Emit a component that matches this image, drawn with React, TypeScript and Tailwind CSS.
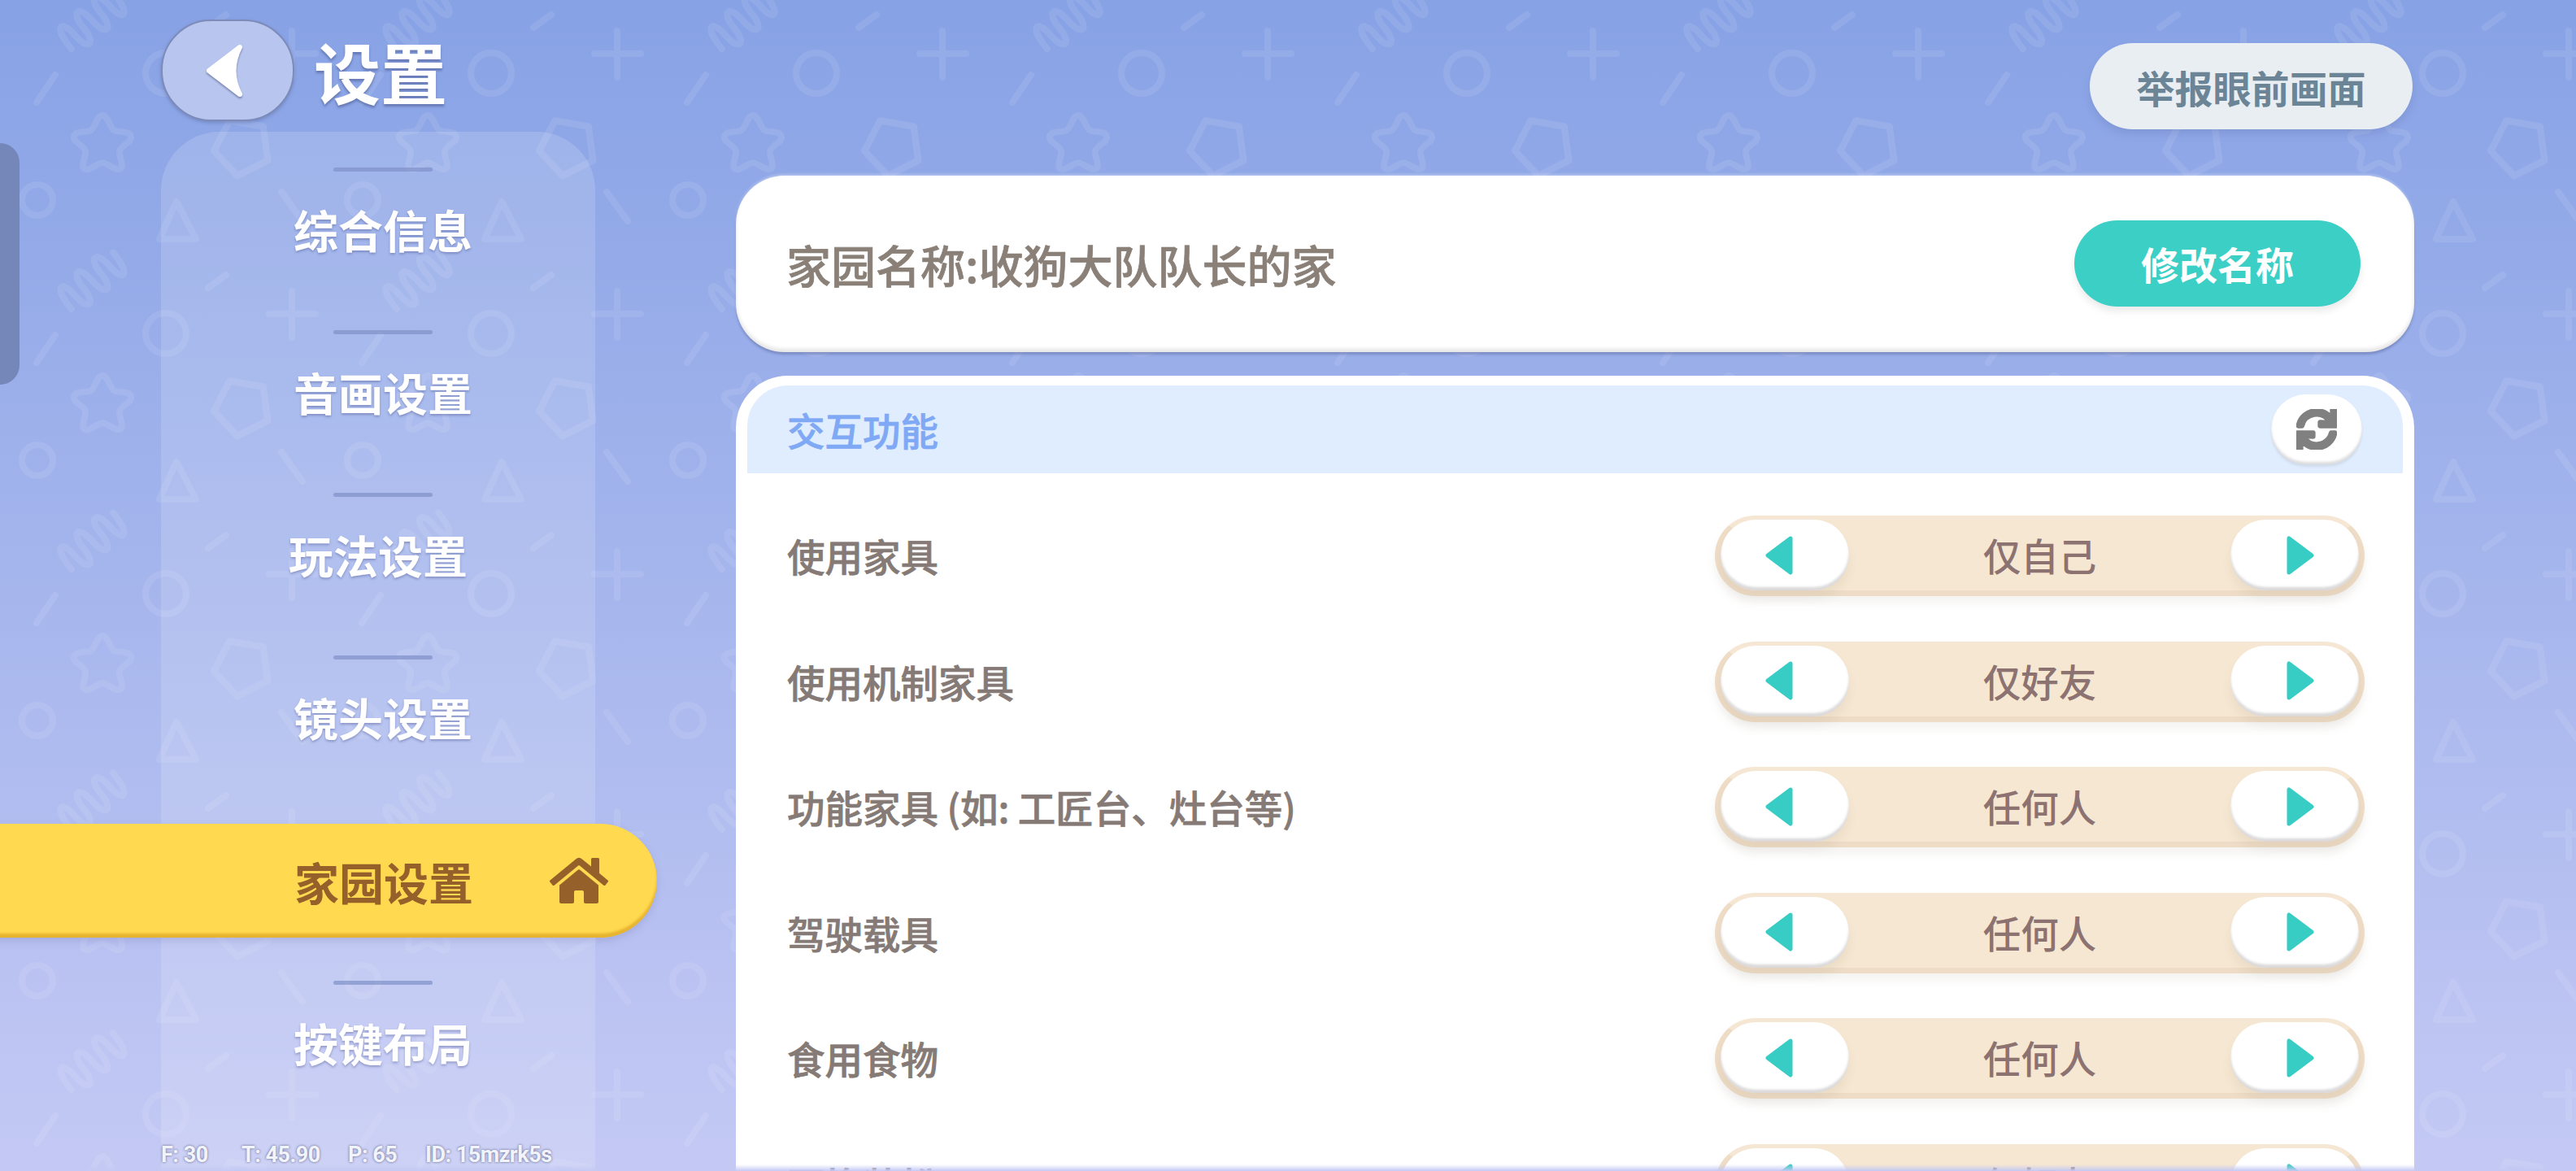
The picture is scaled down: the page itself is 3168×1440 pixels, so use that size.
import { FaHome, FaSync } from "react-icons/fa";

const font = "font-['Noto_Sans_CJK_SC','Noto_Sans',sans-serif]";

const menu = [
  { label: "综合信息" },
  { label: "音画设置" },
  { label: "玩法设置", nudge: true },
  { label: "镜头设置" },
  { label: "家园设置", active: true },
  { label: "按键布局" },
];

const rows = [
  { label: "使用家具", value: "仅自己" },
  { label: "使用机制家具", value: "仅好友" },
  { label: "功能家具 (如: 工匠台、灶台等)", value: "任何人" },
  { label: "驾驶载具", value: "任何人" },
  { label: "食用食物", value: "任何人" },
  { label: "更换装扮", value: "仅好友" },
];

function BackgroundPattern() {
  return (
    <svg className="absolute inset-0 h-full w-full" aria-hidden="true">
      <defs>
        <pattern id="shapes" width="400" height="320" y="-20" patternUnits="userSpaceOnUse">
          <g transform="translate(0,20)" fill="none" stroke="#ffffff" strokeOpacity="0.085" strokeWidth="8" strokeLinecap="round" strokeLinejoin="round">
            <path transform="translate(115,24) rotate(-40)" d="M-44,10 C-44,-26 -30,-26 -30,0 C-30,26 -16,26 -16,0 C-16,-26 -2,-26 -2,0 C-2,26 12,26 12,0 C12,-26 26,-26 26,0 C26,26 40,26 40,-10" />
            <path d="M256,34 L278,18" />
            <path d="M359,38 V95 M331,66 H388" />
            <circle cx="204" cy="90" r="25" />
            <path d="M45,126 L68,92" />
            <path transform="translate(126,177) scale(1.1)" strokeWidth="7" d="M0,-32 C6,-32 9,-17 13,-15 C18,-13 31,-15 32,-8 C33,-2 20,2 19,8 C18,14 25,24 20,28 C15,31 5,21 0,21 C-5,21 -15,31 -20,28 C-25,24 -18,14 -19,8 C-20,2 -33,-2 -32,-8 C-31,-15 -18,-13 -13,-15 C-9,-17 -6,-32 0,-32 Z" />
            <path transform="translate(298,181) rotate(190) scale(1.05)" d="M0,-34 L32,-10 L20,28 L-20,28 L-32,-10 Z" />
            <circle cx="46" cy="246" r="19" />
            <path d="M217,248 L241,294 H196 Z" />
            <path d="M346,236 L372,272" />
          </g>
        </pattern>
      </defs>
      <rect width="100%" height="100%" fill="url(#shapes)" />
    </svg>
  );
}

function Triangle({ flip }: { flip?: boolean }) {
  return (
    <svg width="36" height="50" viewBox="0 0 36 50" className={flip ? "ml-[14px] rotate-180" : "mr-[14px]"}>
      <path d="M32,4 L4,25 L32,46 Z" fill="#38cdc4" stroke="#38cdc4" strokeWidth="5" strokeLinejoin="round" />
    </svg>
  );
}

function StepButton({ flip }: { flip?: boolean }) {
  return (
    <div className="flex h-[87px] w-[158px] items-center justify-center rounded-[44px] bg-white shadow-[inset_0_-4px_3px_rgba(90,80,80,0.22),0_10px_12px_rgba(120,100,80,0.08)]">
      <Triangle flip={flip} />
    </div>
  );
}

function Row({ label, value }: { label: string; value: string }) {
  return (
    <div className="flex h-[99px] shrink-0 items-center justify-between">
      <span className="text-[46.5px] font-medium leading-none text-[#857a75] [-webkit-text-stroke:0.7px_#857a75]">{label}</span>
      <div className="flex h-[99px] w-[799px] items-center justify-between rounded-[50px] border-x-[7px] border-t-[5px] border-b-[7px] border-x-[#eedcc6] border-t-[#f5e7d3] border-b-[#eedcc6] bg-[#f6e7d2] shadow-[0_8px_12px_rgba(120,100,80,0.08)]">
        <StepButton />
        <span className="text-[46.5px] font-medium leading-none text-[#8c7270]">{value}</span>
        <StepButton flip />
      </div>
    </div>
  );
}

function Sidebar() {
  return (
    <div className="flex w-[808px] shrink-0 flex-col">
      <div className="flex items-center pl-[198px] pt-[24px]">
        <button className="flex h-[125px] w-[164px] items-center justify-center rounded-[62px] border-2 border-[#7d8bb8] bg-[#b8c6ef] shadow-[0_2px_4px_rgba(70,80,130,0.35)]">
          <svg width="48" height="66" viewBox="0 0 48 66" className="mr-[8px] drop-shadow-[0_2px_1px_rgba(60,70,110,0.5)]">
            <path d="M43,4 Q28,33 43,62 L5,33 Z" fill="#ffffff" stroke="#ffffff" strokeWidth="6" strokeLinejoin="round" />
          </svg>
        </button>
        <h1 className="ml-[24px] text-[82px] font-bold leading-none text-white [text-shadow:0_3px_3px_rgba(60,70,120,0.45)]">设置</h1>
      </div>
      <div className="ml-[198px] mt-[13px] flex w-[534px] flex-1 flex-col rounded-t-[72px] bg-white/15 pt-[44px]">
        {menu.map((item) =>
          item.active ? (
            <div key={item.label} className="h-[200px] pt-[7px]">
              <div className="-ml-[214px] flex h-[140px] w-[824px] items-center rounded-r-[70px] bg-[#ffd94f] pl-[378px] shadow-[inset_0_-5px_3px_rgba(225,170,40,0.8),0_4px_10px_rgba(110,110,170,0.25)]">
                <span className="text-[55px] font-bold leading-none text-[#96602a]">{item.label}</span>
                <FaHome className="ml-[94px] text-[#96602a]" size={72} />
              </div>
            </div>
          ) : (
            <div key={item.label} className="flex h-[200px] flex-col items-center pl-[12px]">
              <div className="h-[5px] w-[122px] rounded-full bg-[#7f90c8]/70" />
              <span
                className={`mt-[38px] text-[55px] font-bold leading-[64px] text-white [text-shadow:0_2px_3px_rgba(70,80,140,0.4)] ${item.nudge ? "-ml-[12px]" : ""}`}
              >
                {item.label}
              </span>
            </div>
          ),
        )}
      </div>
    </div>
  );
}

export default function App() {
  return (
    <div className={`relative flex h-[1440px] w-[3168px] overflow-hidden bg-gradient-to-b from-[#87a2e5] to-[#c4c9f4] ${font}`}>
      <BackgroundPattern />
      <div className="absolute left-0 top-[176px] h-[297px] w-[24px] rounded-r-[24px] bg-[#7487b8]" />

      <div className="relative flex w-full">
        <Sidebar />

        <div className="ml-[97px] flex w-[2064px] flex-col">
          <div className="flex h-[216px] shrink-0 justify-end pr-[2px] pt-[53px]">
            <button className="flex h-[106px] w-[397px] items-center justify-center rounded-[53px] bg-[#e8eef2] text-[47px] font-bold leading-none text-[#6b8496] shadow-[0_6px_10px_rgba(80,90,150,0.18)]">
              举报眼前画面
            </button>
          </div>

          <div className="flex h-[217px] shrink-0 items-center justify-between rounded-[60px] bg-white pl-[62px] pr-[66px] shadow-[inset_0_-4px_4px_rgba(120,110,110,0.18),0_3px_3px_rgba(70,80,130,0.35),0_-2px_3px_rgba(255,255,255,0.3)]">
            <span className="text-[55px] font-medium leading-none text-[#8a8078] [-webkit-text-stroke:0.7px_#8a8078]">家园名称:收狗大队队长的家</span>
            <button className="-mt-[2px] flex h-[106px] w-[352px] items-center justify-center rounded-[53px] bg-[#3bcfc6] text-[47px] font-bold leading-none text-white shadow-[0_6px_8px_rgba(90,90,90,0.12)]">
              修改名称
            </button>
          </div>

          <div className="mt-[29px] h-[1100px] shrink-0 rounded-t-[64px] border-x-[14px] border-t-[12px] border-white bg-white">
            <div className="flex h-[108px] items-center justify-between rounded-t-[50px] bg-[#e0edfe] pl-[49px] pr-[50px]">
              <span className="text-[46.5px] font-medium leading-none text-[#7fa8f5] [-webkit-text-stroke:0.7px_#7fa8f5]">交互功能</span>
              <button className="flex h-[86px] w-[112px] items-center justify-center rounded-[43px] bg-white shadow-[inset_0_-3px_3px_rgba(90,90,90,0.2),0_3px_3px_rgba(90,90,90,0.12)]">
                <FaSync className="text-[#808080]" size={50} stroke="#808080" strokeWidth={36} />
              </button>
            </div>
            <div className="flex flex-col gap-[55.5px] pl-[49px] pr-[47px] pt-[52px]">
              {rows.map((row) => (
                <Row key={row.label} label={row.label} value={row.value} />
              ))}
            </div>
          </div>
        </div>
      </div>

      <div className="absolute bottom-0 left-0 h-[8px] w-full bg-gradient-to-b from-[#c4c9f4]/0 to-[#c4c9f4]" />

      <div className="absolute left-[198px] top-[1404px] flex font-['Roboto',sans-serif] text-[27px] font-bold leading-[32px] tracking-[-0.5px] text-[#f2f3fb] [text-shadow:0_0_3px_rgba(70,75,110,0.9)]">
        <span className="w-[99px]">F: 30</span>
        <span className="w-[131px]">T: 45.90</span>
        <span className="w-[95px]">P: 65</span>
        <span>ID: 15mzrk5s</span>
      </div>
    </div>
  );
}
